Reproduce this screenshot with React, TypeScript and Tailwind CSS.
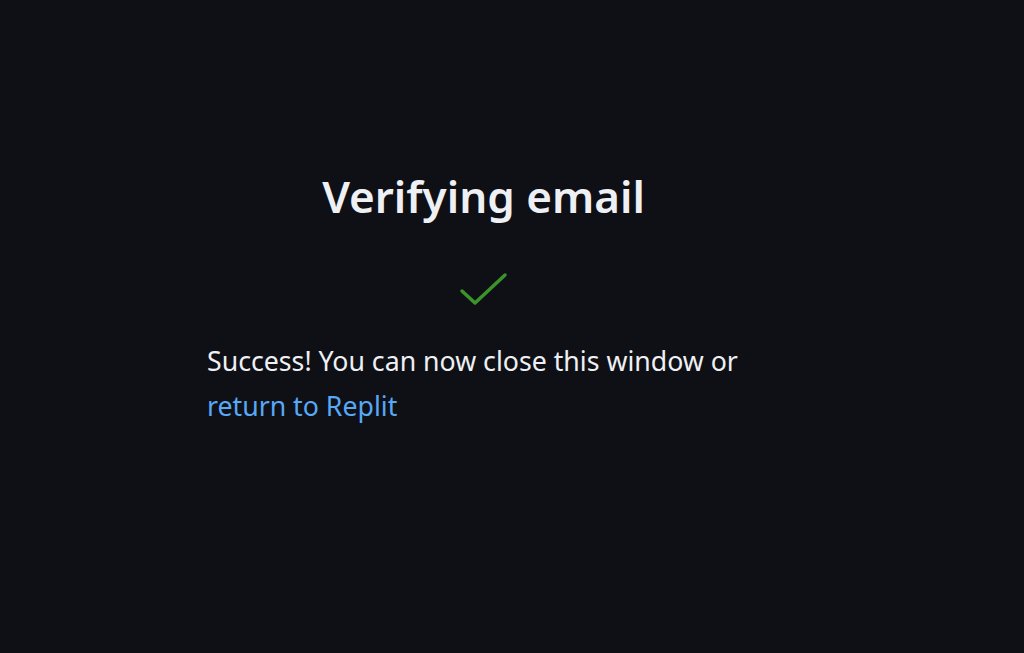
import React from 'react';

const App: React.FC = () => {
  return (
    <div className="min-h-[653px] w-full bg-[#0e1016] font-['Noto_Sans',sans-serif]">
      <div className="ml-[207px] w-[553px] pt-[166px] flex flex-col items-center">
        <h1 className="text-[44px] leading-[60px] font-semibold text-[#eef0f4]">Verifying email</h1>
        <svg className="mt-[45px]" width="50" height="40" viewBox="0 0 50 40" fill="none">
          <path d="M3 20 L16 32 L46 4" stroke="#3b9428" strokeWidth="3.5" strokeLinecap="round" strokeLinejoin="round" />
        </svg>
        <p className="mt-[27px] self-stretch text-[26.7px] leading-[45px] text-[#eef0f4]">
          Success! You can now close this window or{' '}
          <a href="#" className="text-[#58a8f5]">return to Replit</a>
        </p>
      </div>
    </div>
  );
};

export default App;
